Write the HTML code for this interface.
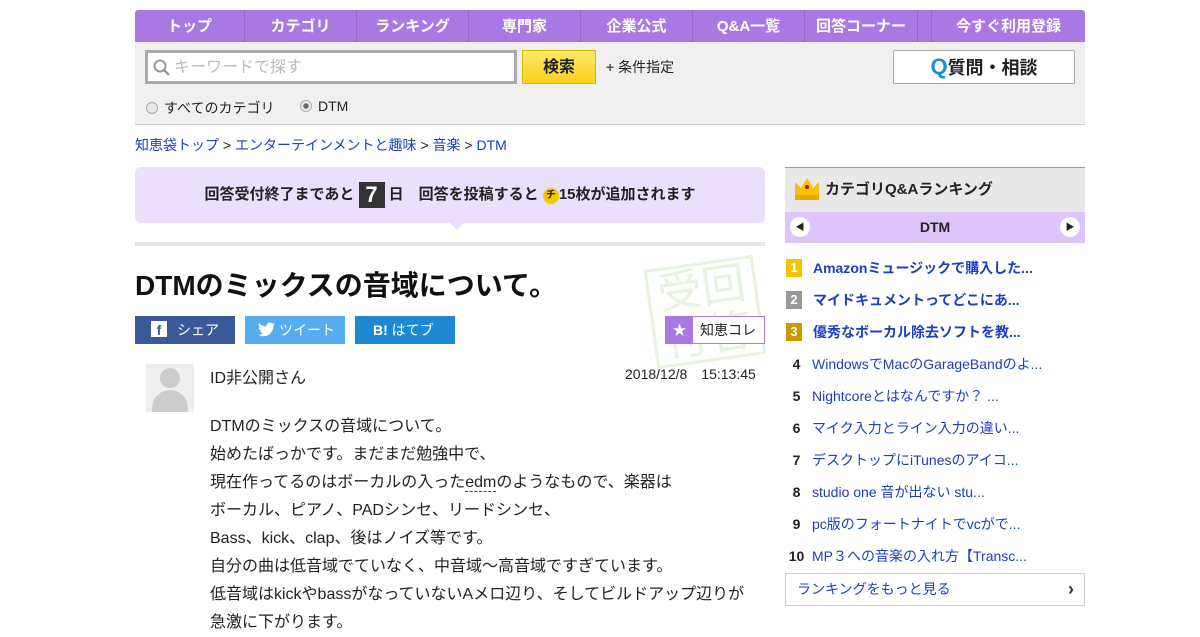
<!DOCTYPE html>
<html><head><meta charset="utf-8"><style>
*{margin:0;padding:0;box-sizing:border-box}
body{width:1200px;height:630px;overflow:hidden;background:#fff;font-family:"Liberation Sans","Noto Sans CJK JP",sans-serif;color:#222;position:relative}
.a{position:absolute}
.nav{left:135px;top:10px;width:950px;height:32px;background:#a978e3;border-radius:3px 3px 0 0;display:flex}
.nav div{color:#fff;font-weight:bold;font-size:15px;text-align:center;line-height:34px;border-right:1px solid #9364cc}
.sb{left:135px;top:42px;width:950px;height:83px;background:#f0f0f0;border-bottom:1px solid #ccc}
a,.lk{color:#1a3fc0;text-decoration:none}
.rk{left:785px;width:300px;height:32px;font-size:14px;display:flex;align-items:center}
.rk .n{width:27px;text-align:center;font-weight:bold;color:#222;padding-right:4px}
.rk .b{width:16px;height:18px;color:#fff;line-height:18px;margin:0 11px 0 1px;text-align:center;font-size:13px}
.body p{font-size:16px;line-height:28px}
</style></head><body>
<div class="a nav">
<div style="width:110px">トップ</div><div style="width:112px">カテゴリ</div><div style="width:112px">ランキング</div><div style="width:112px">専門家</div><div style="width:112px">企業公式</div><div style="width:112px">Q&amp;A一覧</div><div style="width:113px">回答コーナー</div><div style="width:14px"></div><div style="width:153px;border:none">今すぐ利用登録</div>
</div>
<div class="a sb"></div>
<div class="a" style="left:145px;top:50px;width:372px;height:34px;border:3px solid #aaa;background:#fff;font-size:16px;color:#bbb;line-height:29px;padding-left:26px">キーワードで探す
<svg class="a" style="left:5px;top:6px" width="18" height="18"><circle cx="7" cy="7" r="5.5" fill="none" stroke="#999" stroke-width="2"/><path d="M11 11l5 5" stroke="#999" stroke-width="2.5"/></svg></div>
<div class="a" style="left:522px;top:50px;width:74px;height:34px;background:linear-gradient(#ffe866,#f8d21c);border:1px solid #d8b400;font-weight:bold;font-size:16px;text-align:center;line-height:34px">検索</div>
<div class="a" style="left:606px;top:57px;font-size:14px"><b style="color:#555">+</b> 条件指定</div>
<div class="a" style="left:893px;top:50px;width:182px;height:34px;background:#fff;border:1px solid #aaa;border-radius:2px;text-align:center;font-size:18px;font-weight:bold;line-height:32px"><span style="color:#1a8ee0;font-size:22px">Q</span>質問・相談</div>
<div class="a" style="left:146px;top:98px;font-size:14px"><span style="display:inline-block;width:12px;height:12px;border:1px solid #aaa;border-radius:50%;background:#e8e8e8;vertical-align:-1px;margin-right:6px"></span>すべてのカテゴリ</div>
<div class="a" style="left:300px;top:98px;font-size:14px"><span style="display:inline-block;width:12px;height:12px;border:1px solid #aaa;border-radius:50%;background:radial-gradient(#666 2.5px,#eee 3px);vertical-align:-1px;margin-right:6px"></span>DTM</div>
<div class="a" style="left:135px;top:135px;font-size:14px"><a>知恵袋トップ</a> &gt; <a>エンターテインメントと趣味</a> &gt; <a>音楽</a> &gt; <a>DTM</a></div>
<div class="a" style="left:135px;top:167px;width:630px;height:56px;background:#eadffd;border-radius:6px;text-align:center;font-weight:bold;font-size:15px;line-height:56px">回答受付終了まであと <span style="display:inline-block;background:#333;color:#fff;width:26px;height:26px;line-height:26px;font-size:22px;vertical-align:-3px">7</span> 日　回答を投稿すると <span style="display:inline-block;width:16px;height:16px;border-radius:50%;background:#f5c800;font-size:10px;line-height:16px;vertical-align:1px">チ</span>15枚が追加されます</div>
<div class="a" style="left:450px;top:223px;border:7px solid transparent;border-top-color:#eadffd"></div>
<div class="a" style="left:135px;top:242px;width:630px;height:4px;background:#e6e6e6"></div>
<div class="a" style="left:650px;top:262px;width:110px;height:100px;border:3px solid #e6f3de;transform:rotate(-8deg);color:#e6f3de;font-size:44px;line-height:48px;text-align:center">受回<br>付答</div>
<div class="a" style="left:135px;top:264px;font-size:28px;font-weight:bold;color:#111">DTMのミックスの音域について。</div>
<div class="a" style="left:135px;top:316px;width:100px;height:28px;background:#3b5998;color:#fff;font-size:14px;line-height:28px;padding-left:16px"><b style="display:inline-block;background:#fff;color:#3b5998;width:16px;height:16px;line-height:18px;text-align:center;font-size:14px;margin-right:10px">f</b>シェア</div>
<div class="a" style="left:245px;top:316px;width:100px;height:28px;background:#55acee;color:#fff;font-size:14px;line-height:28px;padding-left:34px">ツイート<svg class="a" style="left:13px;top:6px" width="17" height="15" viewBox="0 0 24 20"><path d="M24 2.4a10 10 0 0 1-2.8.8A5 5 0 0 0 23.3.4a10 10 0 0 1-3.1 1.2A5 5 0 0 0 11.8 6 14 14 0 0 1 1.7.9a5 5 0 0 0 1.5 6.6A5 5 0 0 1 1 6.9a5 5 0 0 0 4 4.9 5 5 0 0 1-2.2.1 5 5 0 0 0 4.6 3.4A10 10 0 0 1 0 17.3 14 14 0 0 0 7.5 19.5c9.1 0 14-7.5 14-14v-.6A10 10 0 0 0 24 2.4z" fill="#fff"/></svg></div>
<div class="a" style="left:355px;top:316px;width:100px;height:28px;background:#1e88d0;color:#fff;font-size:14px;line-height:28px;padding-left:18px"><b>B!</b> はてブ</div>
<div class="a" style="left:665px;top:316px;width:100px;height:28px;border:1px solid #a978e3;background:#fff;font-size:14px;line-height:26px"><span style="display:inline-block;width:27px;height:26px;background:#a978e3;color:#fff;text-align:center;margin-right:7px">★</span>知恵コレ</div>
<div class="a" style="left:146px;top:364px;width:48px;height:48px;background:#eee;overflow:hidden"><div class="a" style="left:14px;top:4px;width:20px;height:20px;border-radius:50%;background:#ccc"></div><div class="a" style="left:6px;top:26px;width:36px;height:30px;border-radius:18px 18px 0 0;background:#ccc"></div></div>
<div class="a" style="left:210px;top:364px;font-size:16px">ID非公開さん</div>
<div class="a" style="left:625px;top:364px;font-size:14px">2018/12/8　15:13:45</div>
<div class="a body" style="left:210px;top:413px">
<p>DTMのミックスの音域について。</p><p>始めたばっかです。まだまだ勉強中で、</p><p>現在作ってるのはボーカルの入った<span style="border-bottom:1px dashed #1a3fc0">edm</span>のようなもので、楽器は</p><p>ボーカル、ピアノ、PADシンセ、リードシンセ、</p><p>Bass、kick、clap、後はノイズ等です。</p><p>自分の曲は低音域でていなく、中音域～高音域ですぎています。</p><p>低音域はkickやbassがなっていないAメロ辺り、そしてビルドアップ辺りが</p><p>急激に下がります。</p></div>
<div class="a" style="left:785px;top:167px;width:300px;height:45px;background:#e8e8e8;border-top:1px solid #999;font-weight:bold;font-size:15px;line-height:44px;padding-left:40px"><svg class="a" style="left:10px;top:10px" width="24" height="22"><path d="M0 4l6 6 6-10 6 10 6-6v14H0z" fill="#f5c400"/><rect y="17" width="24" height="5" fill="#e8a800"/><circle cx="12" cy="9" r="2" fill="#c00"/></svg>カテゴリQ&amp;Aランキング</div>
<div class="a" style="left:785px;top:212px;width:300px;height:31px;background:#dcc5fb;text-align:center;font-weight:bold;font-size:14px;line-height:31px">DTM
<span class="a" style="left:5px;top:5px;width:20px;height:20px;border-radius:50%;background:#fff;font-size:9px;line-height:20px">◀</span><span class="a" style="right:5px;top:5px;width:20px;height:20px;border-radius:50%;background:#fff;font-size:9px;line-height:20px">▶</span></div>
<div class="a rk" style="top:252px;font-weight:bold"><span class="b" style="background:#f5c400;margin-left:1px">1</span><a>Amazonミュージックで購入した...</a></div>
<div class="a rk" style="top:284px;font-weight:bold"><span class="b" style="background:#999">2</span><a>マイドキュメントってどこにあ...</a></div>
<div class="a rk" style="top:316px;font-weight:bold"><span class="b" style="background:#c89a00">3</span><a>優秀なボーカル除去ソフトを教...</a></div>
<div class="a rk" style="top:348px"><span class="n">4</span><a>WindowsでMacのGarageBandのよ...</a></div>
<div class="a rk" style="top:380px"><span class="n">5</span><a>Nightcoreとはなんですか？ ...</a></div>
<div class="a rk" style="top:412px"><span class="n">6</span><a>マイク入力とライン入力の違い...</a></div>
<div class="a rk" style="top:444px"><span class="n">7</span><a>デスクトップにiTunesのアイコ...</a></div>
<div class="a rk" style="top:476px"><span class="n">8</span><a>studio one 音が出ない stu...</a></div>
<div class="a rk" style="top:508px"><span class="n">9</span><a>pc版のフォートナイトでvcがで...</a></div>
<div class="a rk" style="top:540px"><span class="n">10</span><a>MP３への音楽の入れ方【Transc...</a></div>
<div class="a" style="left:785px;top:573px;width:300px;height:33px;border:1px solid #ccc;font-size:14px;line-height:31px;padding-left:11px;color:#1a3fc0">ランキングをもっと見る<span class="a" style="right:10px;top:0;color:#333;font-weight:bold;font-size:18px">›</span></div>
</body></html>
